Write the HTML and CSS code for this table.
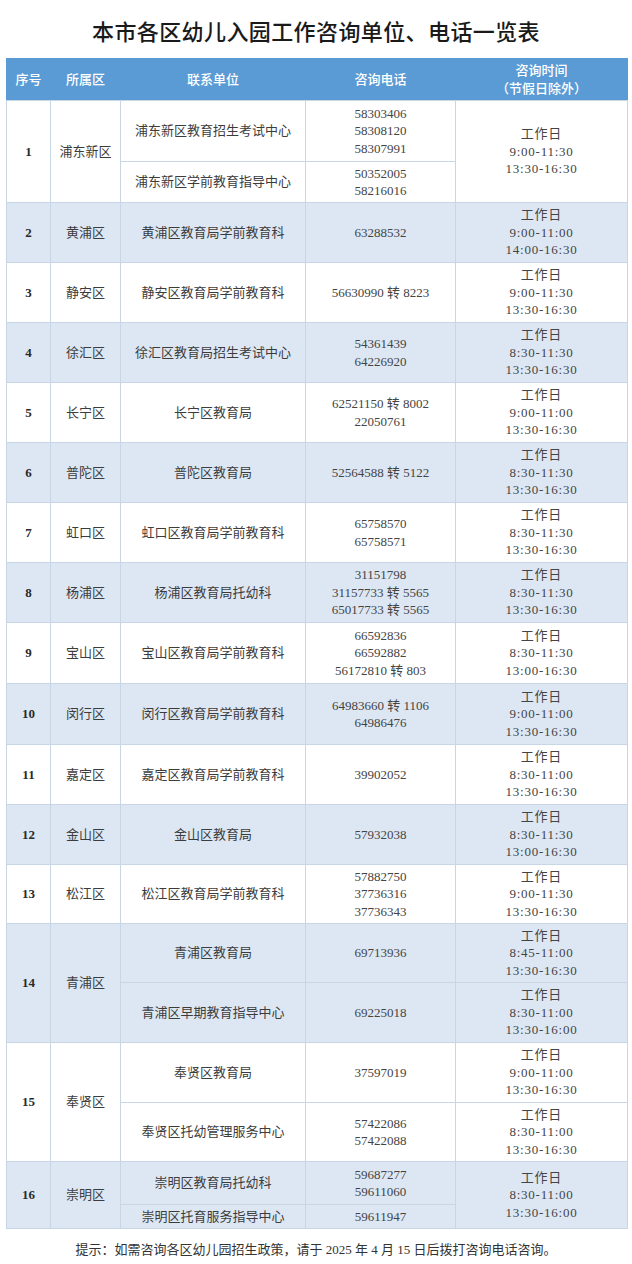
FILE: index.html
```html
<!DOCTYPE html>
<html lang="zh-CN">
<head>
<meta charset="utf-8">
<title>本市各区幼儿入园工作咨询单位、电话一览表</title>
<link rel="stylesheet" href="styles.css">
</head>
<body>
<div class="page">
  <h1 class="title">本市各区幼儿入园工作咨询单位、电话一览表</h1>
  <div class="table">
    <div class="head">
      <div class="hc">序号</div>
      <div class="hc">所属区</div>
      <div class="hc">联系单位</div>
      <div class="hc">咨询电话</div>
      <div class="hc hc2"><span>咨询时间</span><span>（节假日除外）</span></div>
    </div>

    <!-- 1 -->
    <div class="c seq s2">1</div>
    <div class="c s2">浦东新区</div>
    <div class="c">浦东新区教育招生考试中心</div>
    <div class="c num">58303406<br>58308120<br>58307991</div>
    <div class="c tm s2">工作日<br>9:00-11:30<br>13:30-16:30</div>
    <div class="c">浦东新区学前教育指导中心</div>
    <div class="c num">50352005<br>58216016</div>

    <!-- 2 -->
    <div class="c b seq">2</div>
    <div class="c b">黄浦区</div>
    <div class="c b">黄浦区教育局学前教育科</div>
    <div class="c b num">63288532</div>
    <div class="c b tm">工作日<br>9:00-11:00<br>14:00-16:30</div>

    <!-- 3 -->
    <div class="c seq">3</div>
    <div class="c">静安区</div>
    <div class="c">静安区教育局学前教育科</div>
    <div class="c num">56630990 转 8223</div>
    <div class="c tm">工作日<br>9:00-11:30<br>13:30-16:30</div>

    <!-- 4 -->
    <div class="c b seq">4</div>
    <div class="c b">徐汇区</div>
    <div class="c b">徐汇区教育局招生考试中心</div>
    <div class="c b num">54361439<br>64226920</div>
    <div class="c b tm">工作日<br>8:30-11:30<br>13:30-16:30</div>

    <!-- 5 -->
    <div class="c seq">5</div>
    <div class="c">长宁区</div>
    <div class="c">长宁区教育局</div>
    <div class="c num">62521150 转 8002<br>22050761</div>
    <div class="c tm">工作日<br>9:00-11:00<br>13:30-16:30</div>

    <!-- 6 -->
    <div class="c b seq">6</div>
    <div class="c b">普陀区</div>
    <div class="c b">普陀区教育局</div>
    <div class="c b num">52564588 转 5122</div>
    <div class="c b tm">工作日<br>8:30-11:30<br>13:30-16:30</div>

    <!-- 7 -->
    <div class="c seq">7</div>
    <div class="c">虹口区</div>
    <div class="c">虹口区教育局学前教育科</div>
    <div class="c num">65758570<br>65758571</div>
    <div class="c tm">工作日<br>8:30-11:30<br>13:30-16:30</div>

    <!-- 8 -->
    <div class="c b seq">8</div>
    <div class="c b">杨浦区</div>
    <div class="c b">杨浦区教育局托幼科</div>
    <div class="c b num">31151798<br>31157733 转 5565<br>65017733 转 5565</div>
    <div class="c b tm">工作日<br>8:30-11:30<br>13:30-16:30</div>

    <!-- 9 -->
    <div class="c seq">9</div>
    <div class="c">宝山区</div>
    <div class="c">宝山区教育局学前教育科</div>
    <div class="c num">66592836<br>66592882<br>56172810 转 803</div>
    <div class="c tm">工作日<br>8:30-11:30<br>13:00-16:30</div>

    <!-- 10 -->
    <div class="c b seq">10</div>
    <div class="c b">闵行区</div>
    <div class="c b">闵行区教育局学前教育科</div>
    <div class="c b num">64983660 转 1106<br>64986476</div>
    <div class="c b tm">工作日<br>9:00-11:00<br>13:30-16:30</div>

    <!-- 11 -->
    <div class="c seq">11</div>
    <div class="c">嘉定区</div>
    <div class="c">嘉定区教育局学前教育科</div>
    <div class="c num">39902052</div>
    <div class="c tm">工作日<br>8:30-11:00<br>13:30-16:30</div>

    <!-- 12 -->
    <div class="c b seq">12</div>
    <div class="c b">金山区</div>
    <div class="c b">金山区教育局</div>
    <div class="c b num">57932038</div>
    <div class="c b tm">工作日<br>8:30-11:30<br>13:00-16:30</div>

    <!-- 13 -->
    <div class="c seq">13</div>
    <div class="c">松江区</div>
    <div class="c">松江区教育局学前教育科</div>
    <div class="c num">57882750<br>37736316<br>37736343</div>
    <div class="c tm">工作日<br>9:00-11:30<br>13:30-16:30</div>

    <!-- 14 -->
    <div class="c b seq s2">14</div>
    <div class="c b s2">青浦区</div>
    <div class="c b">青浦区教育局</div>
    <div class="c b num">69713936</div>
    <div class="c b tm">工作日<br>8:45-11:00<br>13:30-16:30</div>
    <div class="c b">青浦区早期教育指导中心</div>
    <div class="c b num">69225018</div>
    <div class="c b tm">工作日<br>8:30-11:00<br>13:30-16:00</div>

    <!-- 15 -->
    <div class="c seq s2">15</div>
    <div class="c s2">奉贤区</div>
    <div class="c">奉贤区教育局</div>
    <div class="c num">37597019</div>
    <div class="c tm">工作日<br>9:00-11:00<br>13:30-16:30</div>
    <div class="c">奉贤区托幼管理服务中心</div>
    <div class="c num">57422086<br>57422088</div>
    <div class="c tm">工作日<br>8:30-11:00<br>13:30-16:30</div>

    <!-- 16 -->
    <div class="c b seq s2">16</div>
    <div class="c b s2">崇明区</div>
    <div class="c b">崇明区教育局托幼科</div>
    <div class="c b num">59687277<br>59611060</div>
    <div class="c b tm s2">工作日<br>8:30-11:00<br>13:30-16:00</div>
    <div class="c b">崇明区托育服务指导中心</div>
    <div class="c b num">59611947</div>
  </div>
  <p class="note">提示：如需咨询各区幼儿园招生政策，请于 2025 年 4 月 15 日后拨打咨询电话咨询。</p>
</div>
</body>
</html>
```

FILE: styles.css
```css
html, body {
  margin: 0;
  padding: 0;
  background: #ffffff;
}

.page {
  width: 632px;
  font-family: "Liberation Serif", "Noto Sans CJK SC", serif;
  color: #3c3c3c;
}

.title {
  margin: 0;
  padding-top: 15px;
  height: 30px;
  line-height: 30px;
  text-align: center;
  font-family: "Noto Sans CJK SC", sans-serif;
  font-size: 22px;
  font-weight: 500;
  color: #1a1a1a;
  letter-spacing: 0.4px;
  margin-bottom: 13px;
}

.table {
  margin-left: 6px;
  width: 622px;
  box-sizing: border-box;
  padding: 0 1px 1px 1px;
  background: #c8d5e5;
  display: grid;
  grid-template-columns: 43px 69px 184px 149px 171px;
  grid-template-rows: 42px 60px 40px 59px 59px 59px 59px 59px 59px 59px 60px 60px 59px 59px 58px 58px 59px 59px 58px 42px 23px;
  gap: 1px;
}

.head {
  grid-column: 1 / -1;
  margin: 0 -1px;
  padding: 0 1px;
  display: grid;
  grid-template-columns: 43px 69px 184px 149px 171px;
  column-gap: 1px;
  background: #5b9bd5;
}

.hc {
  display: flex;
  align-items: center;
  justify-content: center;
  text-align: center;
  font-family: "Noto Sans CJK SC", sans-serif;
  font-size: 13px;
  font-weight: 500;
  line-height: 18px;
  color: #ffffff;
}

.hc2 {
  flex-direction: column;
}

.c {
  display: flex;
  align-items: center;
  justify-content: center;
  text-align: center;
  background: #ffffff;
  font-size: 13px;
  line-height: 17.5px;
  color: #3c3c3c;
}

.c.b {
  background: #dde7f4;
}

.s2 {
  grid-row: span 2;
}

.seq {
  font-weight: 700;
  color: #2a2a2a;
}

.num {
  color: #444444;
}

.tm {
  letter-spacing: 0.75px;
  color: #444444;
}

.note {
  margin: 11px 0 0 0;
  line-height: 20px;
  text-align: center;
  font-size: 13px;
  color: #333333;
}
```
